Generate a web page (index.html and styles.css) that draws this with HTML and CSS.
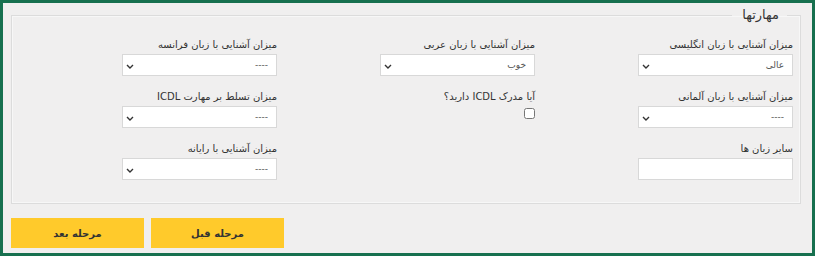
FILE: index.html
```html
<!DOCTYPE html>
<html lang="fa" dir="rtl">
<head>
    <meta charset="UTF-8">
    <meta name="viewport" content="width=device-width, initial-scale=1.0">
    <title>مهارتها</title>
    <link rel="stylesheet" href="styles.css">
</head>
<body>
    <div class="frame">
        <fieldset class="skills">
            <legend>مهارتها</legend>
            <div class="grid">
                <div class="field">
                    <label>میزان آشنایی با زبان انگلیسی</label>
                    <select><option>عالی</option></select>
                </div>
                <div class="field">
                    <label>میزان آشنایی با زبان عربی</label>
                    <select><option>خوب</option></select>
                </div>
                <div class="field">
                    <label>میزان آشنایی با زبان فرانسه</label>
                    <select><option>----</option></select>
                </div>

                <div class="field">
                    <label>میزان آشنایی با زبان آلمانی</label>
                    <select><option>----</option></select>
                </div>
                <div class="field">
                    <label>آیا مدرک ICDL دارید؟</label>
                    <input type="checkbox" class="check">
                </div>
                <div class="field">
                    <label>میزان تسلط بر مهارت ICDL</label>
                    <select><option>----</option></select>
                </div>

                <div class="field">
                    <label>سایر زبان ها</label>
                    <input type="text" class="text">
                </div>
                <div class="field"></div>
                <div class="field">
                    <label>میزان آشنایی با رایانه</label>
                    <select><option>----</option></select>
                </div>
            </div>
        </fieldset>

        <div class="actions">
            <button>مرحله قبل</button>
            <button>مرحله بعد</button>
        </div>
    </div>
</body>
</html>
```

FILE: styles.css
```css
html, body {
    margin: 0;
    padding: 0;
}
body {
    font-family: "DejaVu Sans", "Noto Sans", sans-serif;
    font-size: 10px;
    color: #333;
    background-color: #f0efef;
}
.frame {
    box-sizing: border-box;
    width: 815px;
    height: 256px;
    border: 3px solid #17704f;
    padding: 3px 11px 0 8px;
    background-color: #f0efef;
}
.skills {
    margin: 0;
    padding: 0 7px 10px 6px;
    border: 1px solid #dcdcdc;
    box-shadow: inset 0 0 0 1px #f7f7f7;
    height: 198px;
    box-sizing: border-box;
}
.skills legend {
    font-size: 13px;
    color: #333;
    padding: 0 8px 0 10px;
    margin-right: 6px;
    line-height: 18px;
}
.grid {
    display: grid;
    grid-template-columns: repeat(3, 258px);
    grid-auto-rows: 52px;
    padding-top: 13px;
}
.field {
    display: flex;
    flex-direction: column;
    align-items: flex-start;
}
.field label {
    height: 15px;
    line-height: 15px;
    margin-bottom: 2px;
    white-space: nowrap;
}
select, .text {
    box-sizing: border-box;
    width: 155px;
    height: 22px;
    border: 1px solid #d8d8d8;
    background-color: #fff;
    font-family: inherit;
    font-size: 9px;
    color: #555;
    border-radius: 0;
    margin: 0;
}
select {
    appearance: none;
    -webkit-appearance: none;
    padding: 0 8px 0 20px;
    background-image: url("data:image/svg+xml;utf8,<svg xmlns='http://www.w3.org/2000/svg' width='8' height='5'><path d='M1 1 L4 4 L7 1' fill='none' stroke='%23333' stroke-width='1.4'/></svg>");
    background-repeat: no-repeat;
    background-position: 3px 9px;
}
.check {
    margin: 2px 0 0 0;
    width: 11px;
    height: 11px;
}
.actions {
    display: flex;
    justify-content: flex-end;
    gap: 7px;
    padding-top: 14px;
}
.actions button {
    width: 133px;
    height: 30px;
    border: none;
    background-color: #ffca2b;
    font-family: inherit;
    font-size: 10px;
    font-weight: bold;
    color: #333;
    cursor: pointer;
}
```
